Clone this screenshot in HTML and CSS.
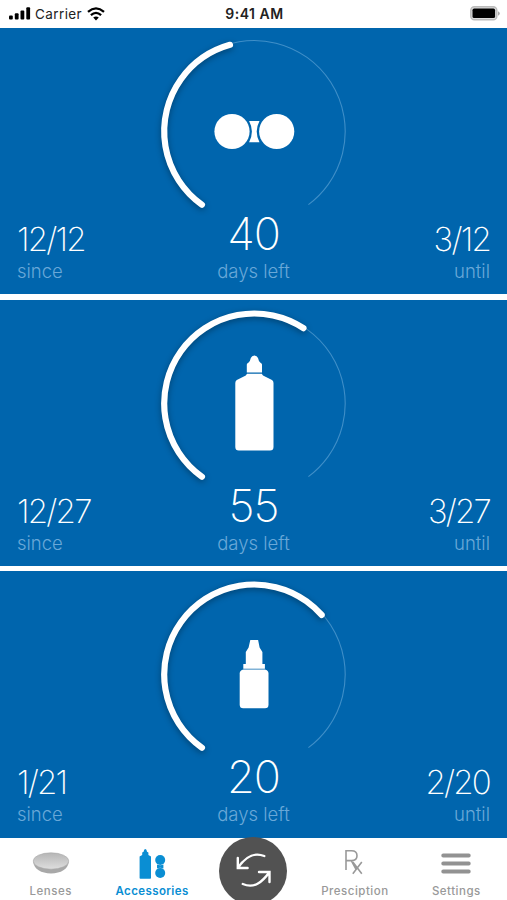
FILE: index.html
```html
<!DOCTYPE html>
<html lang="en">
<head>
  <meta charset="UTF-8" />
  <meta name="viewport" content="width=device-width, initial-scale=1" />
  <title>Accessories</title>
  <link rel="stylesheet" href="styles.css">
</head>
<body>
  <header class="status-bar">
    <div class="status-left">
      <svg class="signal" viewBox="0 0 22 13" aria-hidden="true">
        <rect x="0" y="8.5" width="3.8" height="4" rx="1"/>
        <rect x="5.8" y="6.2" width="3.8" height="6.3" rx="1"/>
        <rect x="11.5" y="3.5" width="3.8" height="9" rx="1"/>
        <rect x="17.3" y="0.3" width="3.8" height="12.2" rx="1"/>
      </svg>
      <span class="carrier">Carrier</span>
      <svg class="wifi" viewBox="0 0 18 14" aria-hidden="true">
        <path d="M1 4.8Q9-2 17 4.8M3.9 8.1Q9 3.6 14.1 8.1"/>
        <path class="wifi-dot" d="M6.2 10.6Q9 8.2 11.8 10.6L9 13.5z"/>
      </svg>
    </div>
    <div class="clock">9:41 AM</div>
    <svg class="battery" viewBox="0 0 30 15" aria-hidden="true">
      <rect class="battery-case" x="0.8" y="0.8" width="26" height="13" rx="3.6"/>
      <rect x="2.5" y="2.6" width="22.6" height="9.4" rx="1.6"/>
      <path class="battery-tip" d="M28 5.2q1.8.8 1.8 2.3T28 9.8z"/>
    </svg>
  </header>

  <main class="cards">
    <section class="card">
      <svg class="dial" viewBox="0 0 200 190" aria-hidden="true">
        <g transform="rotate(125.5 100.2 103.5)">
          <circle class="track" cx="100.2" cy="103.5" r="91" pathLength="360" stroke-dasharray="288 360"/>
        </g>
        <g class="progress">
          <circle cx="100.2" cy="103.5" r="90" pathLength="360" stroke-dasharray="128.9 360" transform="rotate(125.5 100.2 103.5)"/>
        </g>
        <!-- lens case -->
        <g class="shape">
          <circle cx="78" cy="103.5" r="17.6"/>
          <circle cx="122.7" cy="103.5" r="17.6"/>
          <path d="M95.1 93h10.4q-5.6 10.5 0 21.3H95.1q5.6-10.8 0-21.3z"/>
        </g>
      </svg>
      <div class="info">
        <div class="date"><b>12/12</b><span>since</span></div>
        <div class="days"><b>40</b><span>days left</span></div>
        <div class="date until"><b>3/12</b><span>until</span></div>
      </div>
    </section>

    <section class="card">
      <svg class="dial" viewBox="0 0 200 190" aria-hidden="true">
        <g transform="rotate(125.5 100.2 103.5)">
          <circle class="track" cx="100.2" cy="103.5" r="91" pathLength="360" stroke-dasharray="288 360"/>
        </g>
        <g class="progress">
          <circle cx="100.2" cy="103.5" r="90" pathLength="360" stroke-dasharray="177.6 360" transform="rotate(125.5 100.2 103.5)"/>
        </g>
        <!-- solution bottle -->
        <g class="shape">
          <path d="M92.8 72.5v-8q0-1.2 1.8-2 1.6-1.5 2.2-4.500Q97.800 55.500 100.400 55.500t3.600 2.500q.6 3 2.200 4.500 1.800.8 1.800 2v8z"/>
          <path d="M93 73.7h14.800l1.200 1.700 9 4.600q1.500 1 1.500 3v64q0 3.500-3.500 3.500H84.800q-3.500 0-3.500-3.500V83q0-2 1.500-3l9-4.600z"/>
        </g>
      </svg>
      <div class="info">
        <div class="date"><b>12/27</b><span>since</span></div>
        <div class="days"><b>55</b><span>days left</span></div>
        <div class="date until"><b>3/27</b><span>until</span></div>
      </div>
    </section>

    <section class="card">
      <svg class="dial" viewBox="0 0 200 190" aria-hidden="true">
        <g transform="rotate(125.5 100.2 103.5)">
          <circle class="track" cx="100.2" cy="103.5" r="91" pathLength="360" stroke-dasharray="288 360"/>
        </g>
        <g class="progress">
          <circle cx="100.2" cy="103.5" r="90" pathLength="360" stroke-dasharray="193.1 360" transform="rotate(125.5 100.2 103.5)"/>
        </g>
        <!-- eye drops -->
        <g class="shape">
          <path d="M96.3 69h7.8l1.5 7.5 2.8 4.5v12h2.5v4.700H89.300V93h2.500V81l2.800-4.500z"/>
          <path d="M89.500 98.500h21.400q3.600.8 3.600 4v31.200q0 3.500-3.500 3.500H89.200q-3.500 0-3.500-3.500v-31.200q0-3.200 3.800-4z"/>
        </g>
      </svg>
      <div class="info">
        <div class="date"><b>1/21</b><span>since</span></div>
        <div class="days"><b>20</b><span>days left</span></div>
        <div class="date until"><b>2/20</b><span>until</span></div>
      </div>
    </section>
  </main>

  <nav class="tab-bar">
    <a class="tab">
      <svg class="tab-icon" viewBox="0 0 44 34" aria-hidden="true">
        <defs>
          <linearGradient id="lens" x1="0" y1="0" x2="0" y2="1">
            <stop offset="0" stop-color="#b5b5b5"/>
            <stop offset="1" stop-color="#dedede"/>
          </linearGradient>
        </defs>
        <path class="lens-edge" d="M4.2 15C5 22 12 26.4 22 26.4S39 22 39.8 15z"/>
        <ellipse class="lens-top" cx="22" cy="14" rx="17.8" ry="8.2"/>
      </svg>
      <span>Lenses</span>
    </a>
    <a class="tab active">
      <svg class="tab-icon" viewBox="0 0 44 34" aria-hidden="true">
        <path d="M12.2 8V5.5l1.4-.8q.3-2.7 1.7-2.7t1.7 2.7l1.4.8V8l2.6 1.6V31q0 .8-.8.8h-9.8q-.8 0-.8-.8V9.6z"/>
        <circle cx="30.2" cy="13" r="5"/>
        <circle cx="30.2" cy="26" r="5"/>
        <path d="M27 17.5q3.2 1.4 6.4 0v4q-3.2-1.4-6.4 0z"/>
      </svg>
      <span>Accessories</span>
    </a>
    <button class="swap-btn" aria-label="Replace" type="button">
      <svg viewBox="0 0 68 68" aria-hidden="true">
        <path d="M18.8 21v10h9.8M18.8 31C26 20.5 34 14.5 45.3 19"/>
        <path d="M50.5 45V35H40M50.5 35C43 45.5 35 51.8 23.8 47"/>
      </svg>
    </button>
    <a class="tab">
      <svg class="tab-icon rx" viewBox="0 0 44 34" aria-hidden="true">
        <path d="M13 23V3.8h5.5q5.5 0 5.5 4.9t-5.5 4.9H13M18.300 13.600l5.200 9.400M19.800 15l9 11.800M28.800 15l-9 11.800"/>
      </svg>
      <span>Presciption</span>
    </a>
    <a class="tab">
      <svg class="tab-icon bars" viewBox="0 0 44 34" aria-hidden="true">
        <path d="M9.2 8.5h25.6M9.2 16.5h25.6M9.2 24.5h25.6"/>
      </svg>
      <span>Settings</span>
    </a>
  </nav>
</body>
</html>
```

FILE: styles.css
```css
* {
  box-sizing: border-box;
}
html, body {
  margin: 0;
  padding: 0;
  height: 100%;
}
body {
  width: 507px;
  height: 900px;
  display: flex;
  flex-direction: column;
  overflow: hidden;
  background: #fff;
  font-family: Inter, "Liberation Sans", sans-serif;
}
.status-bar {
  height: 28px;
  flex: none;
  display: grid;
  grid-template-columns: 1fr auto 1fr;
  align-items: center;
  padding: 0 7px 1px 9px;
  font-size: 13.5px;
  color: #222;
}
.status-left {
  display: flex;
  align-items: center;
}
.signal {
  width: 22px;
  height: 13px;
}
.carrier {
  margin: 0 5px 0 4px;
  letter-spacing: 0.4px;
}
.wifi {
  width: 18px;
  height: 14px;
  fill: none;
  stroke: #000;
  stroke-width: 2.3;
}
.wifi-dot {
  fill: #000;
  stroke: none;
}
.clock {
  font-size: 14px;
  font-weight: 600;
  letter-spacing: 0.5px;
}
.battery {
  width: 30px;
  height: 15px;
  justify-self: end;
}
.battery-case {
  fill: #ddd;
  stroke: #bbb;
  stroke-width: 1.5;
}
.battery-tip {
  fill: #aaa;
}
.cards {
  flex: none;
  height: 809.5px;
  display: flex;
  flex-direction: column;
  gap: 5.2px;
}
.card {
  flex: 1;
  display: flex;
  flex-direction: column;
  align-items: center;
  background: #0065ad;
  color: #fff;
}
.dial {
  width: 200px;
  height: 190px;
  flex: none;
}
.track {
  fill: none;
  stroke: #3f8fc8;
  stroke-width: 1.1;
}
.progress {
  fill: none;
  stroke: #fff;
  stroke-width: 6.2;
  stroke-linecap: round;
  filter: drop-shadow(0 2px 3px rgba(0,0,0,0.35));
}
.shape {
  fill: #fff;
}
.info {
  width: 100%;
  margin-top: -10px;
  padding: 0 17px;
  display: grid;
  grid-template-columns: 1fr auto 1fr;
  align-items: end;
}
.info b,
.info span {
  display: block;
}
.info b {
  font-weight: 200;
  font-size: 33px;
  line-height: 40px;
  letter-spacing: -1.8px;
}
.info span {
  font-weight: 300;
  font-size: 18.5px;
  line-height: 24px;
  color: #69a8d8;
}
.days {
  text-align: center;
}
.info .days b {
  font-size: 45px;
  line-height: 51px;
  letter-spacing: -1px;
}
.until {
  text-align: right;
}
.tab-bar {
  flex: 1;
  display: grid;
  grid-template-columns: repeat(5, 1fr);
  background: #fff;
}
.tab {
  display: flex;
  flex-direction: column;
  align-items: center;
  padding-top: 9px;
  font-size: 11.5px;
  font-weight: 500;
  line-height: 14px;
  letter-spacing: 0.5px;
  color: #999;
}
.tab-icon {
  width: 44px;
  height: 34px;
  margin-bottom: 3px;
  fill: currentColor;
}
.active {
  color: #0a8ed3;
  font-weight: 600;
  letter-spacing: 0.4px;
}
.lens-edge {
  fill: #a8a8a8;
}
.lens-top {
  fill: url(#lens);
  stroke: #aaa;
  stroke-width: 0.6;
}
.rx {
  fill: none;
  stroke: #999;
  stroke-width: 1.6;
}
.bars {
  stroke: #929292;
  stroke-width: 3.8;
  stroke-linecap: round;
}
.swap-btn {
  width: 68px;
  height: 68px;
  margin-top: -1px;
  justify-self: center;
  padding: 0;
  border: none;
  border-radius: 50%;
  background: #525252;
}
.swap-btn svg {
  display: block;
  width: 68px;
  height: 68px;
  fill: none;
  stroke: #fff;
  stroke-width: 2.4;
  stroke-linecap: round;
}
```
